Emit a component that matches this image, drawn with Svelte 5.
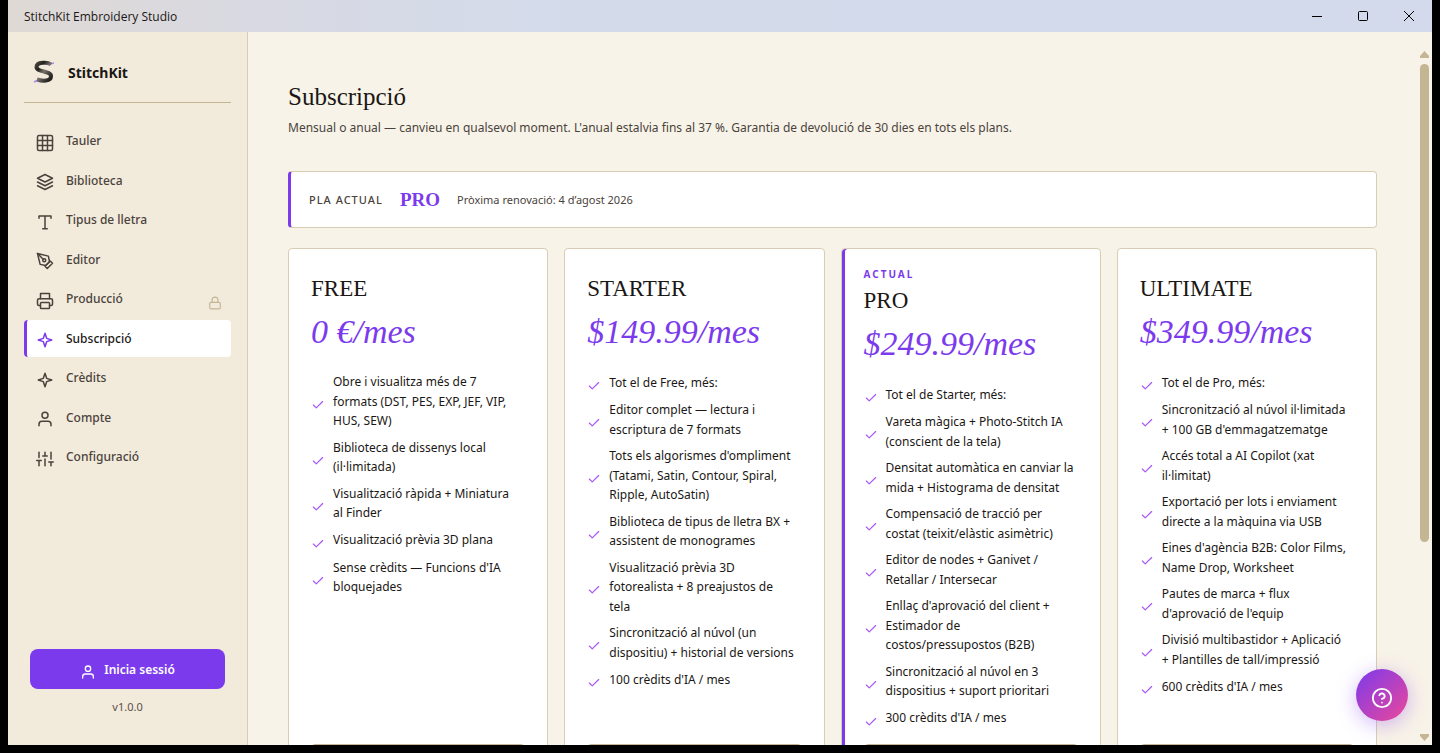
<script lang="ts">
    type IconName =
        | 'grid' | 'layers' | 'type' | 'pen' | 'printer' | 'sparkle'
        | 'user' | 'sliders' | 'lock' | 'check' | 'help';

    const icons: Record<IconName, string> = {
        grid: '<rect x="2" y="2" width="20" height="20" rx="2"/><path d="M2 8.700h20M2 15.300h20M8.700 2v20M15.300 2v20"/>',
        layers: '<path d="M12 2 2 7l10 5 10-5-10-5Z"/><path d="m2 12 10 5 10-5"/><path d="m2 17 10 5 10-5"/>',
        type: '<path d="M4 7V4h16v3M12 4v17M9 21h6"/>',
        pen: '<path d="m12 19 7-7 3 3-7 7-3-3z"/><path d="m18 13-1.500-7.500L2 2l3.500 14.500L13 18l5-5z"/><path d="m2 2 7.600 7.600"/><circle cx="11" cy="11" r="2"/>',
        printer: '<path d="M6 9V2h12v7"/><path d="M6 18H4a2 2 0 0 1-2-2v-5a2 2 0 0 1 2-2h16a2 2 0 0 1 2 2v5a2 2 0 0 1-2 2h-2"/><rect x="6" y="14" width="12" height="8" rx="1"/>',
        sparkle: '<path d="M12 3l2.200 6.800L21 12l-6.800 2.200L12 21l-2.200-6.800L3 12l6.800-2.200z"/>',
        user: '<path d="M20 21v-2a4 4 0 0 0-4-4H8a4 4 0 0 0-4 4v2"/><circle cx="12" cy="7" r="4"/>',
        sliders: '<path d="M4 21v-7M4 10V3M12 21v-9M12 8V3M20 21v-5M20 12V3M1 14h6M9 8h6M17 16h6"/>',
        lock: '<rect x="3" y="11" width="18" height="11" rx="2"/><path d="M7 11V7a5 5 0 0 1 10 0v4"/>',
        check: '<path d="M20 6 9 17l-5-5"/>',
        help: '<circle cx="12" cy="12" r="10"/><path d="M9.100 9a3 3 0 0 1 5.800 1c0 2-3 3-3 3"/><path d="M12 17h.01"/>',
    };

    const navItems: { label: string; icon: IconName; locked?: boolean }[] = [
        { label: 'Tauler', icon: 'grid' },
        { label: 'Biblioteca', icon: 'layers' },
        { label: 'Tipus de lletra', icon: 'type' },
        { label: 'Editor', icon: 'pen' },
        { label: 'Producció', icon: 'printer', locked: true },
        { label: 'Subscripció', icon: 'sparkle' },
        { label: 'Crèdits', icon: 'sparkle' },
        { label: 'Compte', icon: 'user' },
        { label: 'Configuració', icon: 'sliders' },
    ];

    const plans = [
        {
            name: 'FREE',
            price: '0 €/mes',
            features: [
                'Obre i visualitza més de 7 formats (DST, PES, EXP, JEF, VIP, HUS, SEW)',
                'Biblioteca de dissenys local (il·limitada)',
                'Visualització ràpida + Miniatura al\u00a0Finder',
                'Visualització prèvia 3D plana',
                "Sense crèdits — Funcions d'IA bloquejades",
            ],
        },
        {
            name: 'STARTER',
            price: '$149.99/mes',
            features: [
                'Tot el de Free, més:',
                'Editor complet — lectura i escriptura de 7 formats',
                "Tots els algorismes d'ompliment (Tatami, Satin, Contour, Spiral, Ripple, AutoSatin)",
                'Biblioteca de tipus de lletra BX + assistent de monogrames',
                'Visualització prèvia 3D fotorealista + 8 preajustos de\ntela',
                'Sincronització al núvol (un dispositiu) + historial de versions',
                "100 crèdits d'IA / mes",
            ],
        },
        {
            name: 'PRO',
            price: '$249.99/mes',
            features: [
                'Tot el de Starter, més:',
                'Vareta màgica + Photo-Stitch IA (conscient de la tela)',
                'Densitat automàtica en canviar la mida + Histograma de densitat',
                'Compensació de tracció per costat (teixit/elàstic asimètric)',
                'Editor de nodes + Ganivet / Retallar / Intersecar',
                "Enllaç d'aprovació del client + Estimador de costos/pressupostos (B2B)",
                'Sincronització al núvol en 3 dispositius + suport prioritari',
                "300 crèdits d'IA / mes",
            ],
        },
        {
            name: 'ULTIMATE',
            price: '$349.99/mes',
            features: [
                'Tot el de Pro, més:',
                "Sincronització al núvol il·limitada + 100 GB d'emmagatzematge",
                'Accés total a AI Copilot (xat il·limitat)',
                'Exportació per lots i enviament directe a la màquina via USB',
                "Eines d'agència B2B: Color Films, Name Drop, Worksheet",
                "Pautes de marca + flux d'aprovació de l'equip",
                'Divisió multibastidor + Aplicació +\u00a0Plantilles de tall/impressió',
                "600 crèdits d'IA / mes",
            ],
        },
    ];

    let activeNav = $state('Subscripció');
    let currentPlan = $state('PRO');
</script>

{#snippet icon(name: IconName)}
    <svg class="icon {name}" viewBox="0 0 24 24" aria-hidden="true">{@html icons[name]}</svg>
{/snippet}

<div class="window">
    <header class="titlebar">
        <span>StitchKit Embroidery Studio</span>
        <div class="window-controls">
            <button aria-label="Minimitza"><svg viewBox="0 0 10 10"><path d="M0 5.500h10" /></svg></button>
            <button aria-label="Maximitza"><svg viewBox="0 0 10 10"><rect x=".5" y=".5" width="9" height="9" rx="1" /></svg></button>
            <button aria-label="Tanca"><svg viewBox="0 0 10 10"><path d="m0 0 10 10M10 0 0 10" /></svg></button>
        </div>
    </header>

    <div class="body">
        <aside class="sidebar">
            <div class="brand">
                <svg class="logo" viewBox="0 0 24 24" aria-hidden="true">
                    <defs>
                        <linearGradient id="thread" x1="0" y1="0" x2="1" y2="1">
                            <stop offset="0" stop-color="#4a4740" />
                            <stop offset=".25" stop-color="#24221f" />
                            <stop offset=".5" stop-color="#77736b" />
                            <stop offset=".75" stop-color="#403d38" />
                            <stop offset="1" stop-color="#1c1a18" />
                        </linearGradient>
                    </defs>
                    <path d="M18 4l4-1M6 20l-4 2" stroke="#a78bfa" stroke-width="1.500" />
                    <path d="M19 4.500C16 2 4.500 1.500 4.500 7c0 5.500 14.500 3.500 14.500 9 0 6-9 5-14 3.500" stroke="url(#thread)" stroke-width="4" />
                </svg>
                <strong>StitchKit</strong>
            </div>

            <nav>
                {#each navItems as item}
                    <button
                            class="nav-item"
                            class:active={item.label === activeNav}
                            onclick={() => (activeNav = item.label)}>
                        {@render icon(item.icon)}
                        <span>{item.label}</span>
                        {#if item.locked}
                            {@render icon('lock')}
                        {/if}
                    </button>
                {/each}
            </nav>

            <div class="account">
                <button class="login">{@render icon('user')}<span>Inicia sessió</span></button>
                <small>v1.0.0</small>
            </div>
        </aside>

        <main>
            <h1>Subscripció</h1>
            <p class="lead">Mensual o anual — canvieu en qualsevol moment. L'anual estalvia fins al 37 %. Garantia de devolució de 30 dies en tots els plans.</p>

            <section class="current">
                <span class="label">PLA ACTUAL</span>
                <strong>{currentPlan}</strong>
                <span class="renewal">Pròxima renovació: 4 d’agost 2026</span>
            </section>

            <section class="plans">
                {#each plans as plan}
                    <article class="plan" class:selected={plan.name === currentPlan}>
                        {#if plan.name === currentPlan}
                            <div class="badge">ACTUAL</div>
                        {/if}
                        <h2>{plan.name}</h2>
                        <div class="price">{plan.price}</div>
                        <ul>
                            {#each plan.features as feature}
                                <li>{@render icon('check')}<span>{feature}</span></li>
                            {/each}
                        </ul>
                        <button class="choose" aria-label={plan.name} onclick={() => (currentPlan = plan.name)}></button>
                    </article>
                {/each}
            </section>
        </main>

        <div class="scrollbar" aria-hidden="true">
            <svg viewBox="0 0 9 7"><path d="M4.500 0 9 5v2H0V5z" /></svg>
            <div class="track"><div class="thumb"></div></div>
            <svg viewBox="0 0 9 7"><path d="M4.500 7 9 2V0H0v2z" /></svg>
        </div>
    </div>

    <button class="help-button" aria-label="Ajuda">{@render icon('help')}</button>
</div>

<style>
    :global(body) {
        margin: 0;
        background: #000;
    }

    .window {
        --serif: 'Liberation Serif', serif;
        --violet: #7c3aed;
        --sand: #c4b594;
        position: relative;
        box-sizing: border-box;
        height: 100vh;
        padding: 0 8px 8px;
        display: flex;
        flex-direction: column;
        font-family: 'Noto Sans', 'Open Sans', sans-serif;
        font-size: 12px;
        color: #1a1715;
    }

    button {
        font: inherit;
        color: inherit;
        border: none;
        background: none;
        cursor: pointer;
    }

    svg {
        fill: none;
        stroke: currentColor;
        flex: none;
    }

    .icon {
        width: 18px;
        height: 18px;
        stroke-width: 2;
        stroke-linecap: round;
        stroke-linejoin: round;
    }

    .titlebar {
        height: 32px;
        flex: none;
        display: flex;
        align-items: center;
        justify-content: space-between;
        padding-left: 16px;
        font-family: 'Open Sans', sans-serif;
        background: linear-gradient(90deg, #dfd9d5, #d8d9e2 17%, #d3dbeb 40%, #d2daeb);
    }

    .window-controls {
        display: flex;
    }

    .window-controls button {
        width: 46px;
        height: 32px;
        padding: 0;
    }

    .window-controls svg {
        width: 10px;
        height: 10px;
        stroke: #000;
    }

    .body {
        flex: 1;
        min-height: 0;
        display: flex;
        background: #f8f3e8;
    }

    .sidebar {
        box-sizing: border-box;
        width: 240px;
        flex: none;
        display: flex;
        flex-direction: column;
        padding: 24px 16px;
        background: #f2eadb;
        border-right: 1px solid #d8ccb6;
    }

    .brand {
        display: flex;
        align-items: center;
        gap: 12px;
        padding: 4px 8px 18px;
        border-bottom: 1px solid var(--sand);
    }

    .logo {
        width: 24px;
        height: 24px;
    }

    .brand strong {
        font-size: 14px;
    }

    nav {
        display: flex;
        flex-direction: column;
        gap: 2px;
        margin-top: 19px;
    }

    .nav-item {
        display: flex;
        align-items: center;
        gap: 12px;
        padding: 9px;
        border-left: 3px solid transparent;
        border-radius: 4px;
        font-weight: 500;
        line-height: 1.625;
        color: #4a433c;
        text-align: left;
    }

    .nav-item .icon {
        margin: 2px 0 -2px;
    }

    .nav-item .lock {
        width: 14px;
        height: 14px;
        margin: 4px 0 -4px auto;
        color: var(--sand);
    }

    .nav-item.active {
        background: #fff;
        border-left-color: var(--violet);
        color: #1a1715;
    }

    .nav-item.active .icon {
        color: var(--violet);
    }

    .account {
        margin-top: auto;
        padding: 0 6px 6px;
        display: flex;
        flex-direction: column;
        align-items: center;
        gap: 10px;
    }

    .login {
        width: 100%;
        height: 40px;
        display: flex;
        align-items: center;
        justify-content: center;
        gap: 8px;
        border-radius: 8px;
        background: var(--violet);
        color: #fff;
        font-weight: 600;
    }

    .login .icon {
        width: 16px;
        height: 16px;
        margin-top: 6px;
    }

    .account small {
        font-size: 11px;
        line-height: 16px;
        color: #5a524a;
    }

    main {
        flex: 1;
        min-width: 0;
        overflow: hidden;
        padding: 48px 43px 0 40px;
    }

    h1,
    h2 {
        margin: 0;
        font-family: var(--serif);
        font-weight: 400;
    }

    h1 {
        font-size: 25px;
        line-height: 34px;
    }

    .lead {
        margin: 4px 0 33px;
        line-height: 20px;
        color: #4a433c;
    }

    .current {
        display: flex;
        align-items: center;
        gap: 17px;
        padding: 16px 18px;
        background: #fff;
        border: 1px solid #d9ceb4;
        border-left: 3px solid var(--violet);
        border-radius: 4px;
    }

    .current .label {
        font-size: 11px;
        font-weight: 500;
        letter-spacing: 1px;
        color: #4a433c;
    }

    .current strong {
        font-family: var(--serif);
        font-size: 19px;
        line-height: 23px;
        color: var(--violet);
    }

    .renewal {
        font-size: 11px;
        color: #4a433c;
    }

    .plans {
        display: grid;
        grid-template-columns: repeat(4, minmax(0, 1fr));
        gap: 16px;
        margin-top: 20px;
    }

    .plan {
        display: flex;
        flex-direction: column;
        padding: 22px;
        background: #fff;
        border: 1px solid #d9ceb4;
        border-radius: 4px;
    }

    .plan.selected {
        padding-top: 18px;
        box-shadow: inset 3px 0 var(--violet);
    }

    .badge {
        margin-bottom: 2px;
        font-size: 10px;
        font-weight: 700;
        line-height: 14px;
        letter-spacing: 2px;
        color: var(--violet);
    }

    h2 {
        font-size: 23px;
        line-height: 36px;
    }

    .price {
        font-family: var(--serif);
        font-size: 34px;
        font-style: italic;
        line-height: 50px;
        color: var(--violet);
    }

    ul {
        flex: 1;
        display: flex;
        flex-direction: column;
        gap: 7px;
        margin: 15px 0;
        padding: 0 2px 0 0;
        list-style: none;
    }

    li {
        display: flex;
        align-items: center;
        gap: 8px;
        line-height: 1.625;
        white-space: pre-line;
    }

    .check {
        width: 14px;
        height: 14px;
        margin-top: 7px;
        color: #a855f7;
    }

    .choose {
        height: 40px;
        border: 1px solid var(--sand);
        border-radius: 4px;
    }

    .scrollbar {
        display: flex;
        flex-direction: column;
        align-items: center;
        gap: 6px;
        width: 9px;
        margin-right: 3px;
        padding: 19px 0 4px;
    }

    .scrollbar svg {
        width: 9px;
        height: 7px;
        fill: var(--sand);
        stroke: none;
    }

    .track {
        flex: 1;
        width: 100%;
    }

    .thumb {
        height: 72%;
        border-radius: 5px;
        background: var(--sand);
    }

    .help-button {
        position: absolute;
        right: 32px;
        bottom: 32px;
        width: 52px;
        height: 52px;
        display: flex;
        align-items: center;
        justify-content: center;
        padding: 5px 0 0;
        border-radius: 50%;
        background: linear-gradient(135deg, #7c3aed, #ec4899);
        box-shadow: 0 4px 20px rgba(124, 58, 237, 0.35);
        color: #fff;
    }

    .help-button .icon {
        width: 22px;
        height: 22px;
    }
</style>
